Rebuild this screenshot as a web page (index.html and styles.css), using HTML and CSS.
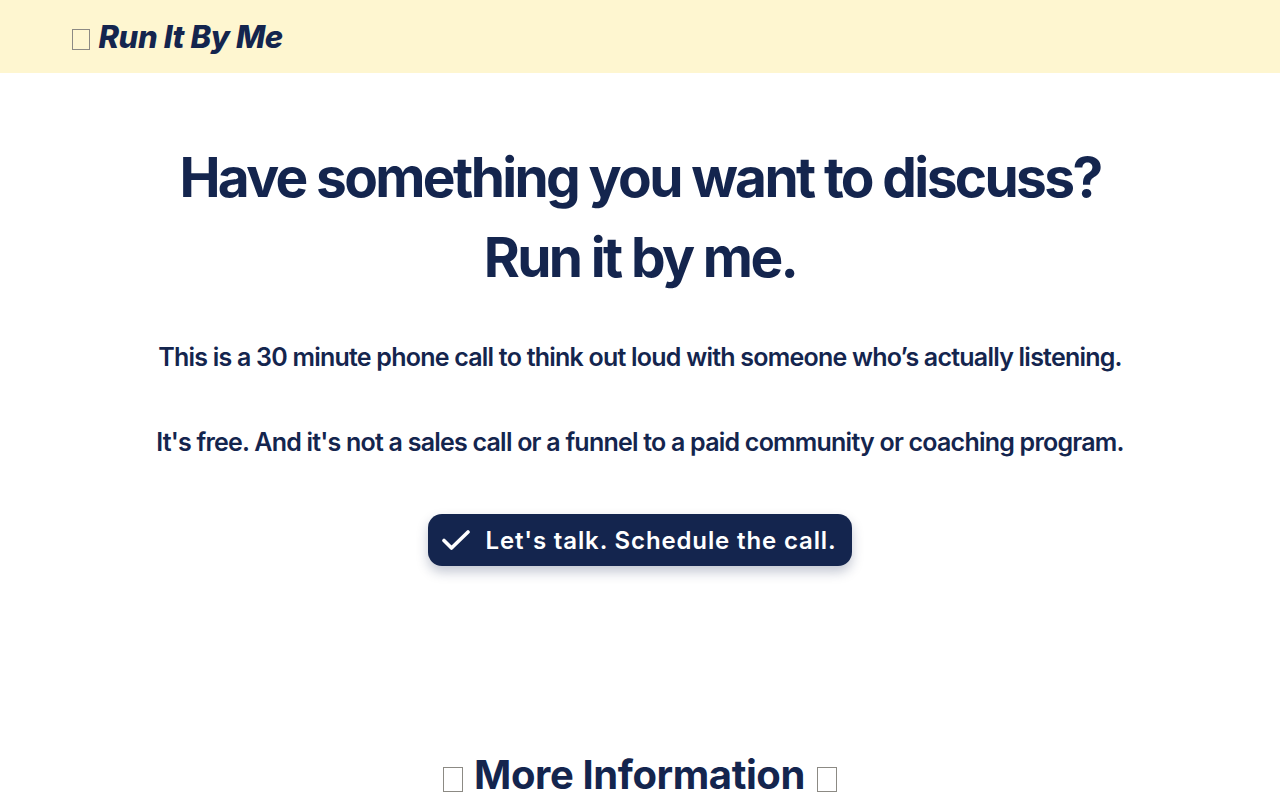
FILE: index.html
```html
<!DOCTYPE html>
<html lang="en">
<head>
<meta charset="utf-8">
<title>Run It By Me</title>
<link rel="stylesheet" href="styles.css">
</head>
<body>
<header class="site-header">
  <div class="header-inner">
    <a class="logo" href="#"><span class="tofu tofu-sm" aria-hidden="true"></span> Run It By Me</a>
  </div>
</header>
<main class="hero">
  <h1 class="hero-title">Have something you want to discuss?<br>Run it by me.</h1>
  <p class="hero-text">This is a 30 minute phone call to think out loud with someone who’s actually listening.</p>
  <p class="hero-text">It's free. And it's not a sales call or a funnel to a paid community or coaching program.</p>
  <a class="cta" href="#">
    <svg class="cta-icon" viewBox="0 0 28 20" width="28" height="20" aria-hidden="true"><path d="M2 10.5l7.5 7.5L26 2" fill="none" stroke="#fff" stroke-width="3.6" stroke-linecap="round" stroke-linejoin="round"/></svg>
    <span>Let's talk. Schedule the call.</span>
  </a>
</main>
<section class="more">
  <h2 class="more-title"><span class="tofu tofu-lg tofu-left" aria-hidden="true"></span> More Information <span class="tofu tofu-lg tofu-right" aria-hidden="true"></span></h2>
</section>
</body>
</html>
```
FILE: styles.css
```css
* { box-sizing: border-box; }
html, body { margin: 0; padding: 0; }
body {
  font-family: Inter, "Noto Sans", sans-serif;
  color: #14254e;
  background: #ffffff;
}
.tofu {
  display: inline-block;
  border: 1px solid #8c8a84;
  vertical-align: baseline;
}
.tofu-sm { width: 18px; height: 21px; margin-bottom: -2px; margin-right: 2px; }
.tofu-lg { width: 20px; height: 25px; margin-bottom: -3px; }
.tofu-left { margin-right: 2px; }
.tofu-right { margin-left: 3px; }
.site-header {
  background: #fef6d0;
  height: 73px;
  display: flex;
  align-items: center;
}
.header-inner {
  padding: 0 72px;
  width: 100%;
}
.logo {
  font-size: 31px;
  font-weight: 800;
  font-style: italic;
  letter-spacing: -0.012em;
  color: #14254e;
  text-decoration: none;
}
.hero {
  display: flex;
  flex-direction: column;
  align-items: center;
  text-align: center;
  padding-top: 64px;
}
.hero-title {
  margin: 0;
  font-size: 55px;
  line-height: 80px;
  font-weight: 700;
  letter-spacing: -0.048em;
}
.hero-text {
  margin: 0;
  font-size: 25px;
  line-height: 32px;
  font-weight: 600;
  letter-spacing: -0.031em;
}
.hero-title + .hero-text { margin-top: 44px; }
.hero-text + .hero-text { margin-top: 53px; }
.cta {
  margin-top: 56px;
  display: flex;
  align-items: center;
  gap: 16px;
  height: 52px;
  padding: 0 16px 0 14px;
  background: #14254e;
  color: #fff;
  border-radius: 14px;
  text-decoration: none;
  font-size: 24px;
  font-weight: 600;
  letter-spacing: 0.036em;
  box-shadow: 0 6px 12px rgba(20, 37, 78, 0.25);
}
.cta-icon { display: block; }
.more {
  text-align: center;
  padding-top: 185px;
}
.more-title {
  margin: 0;
  font-size: 40px;
  line-height: 48px;
  font-weight: 700;
  letter-spacing: -0.01em;
}
```
